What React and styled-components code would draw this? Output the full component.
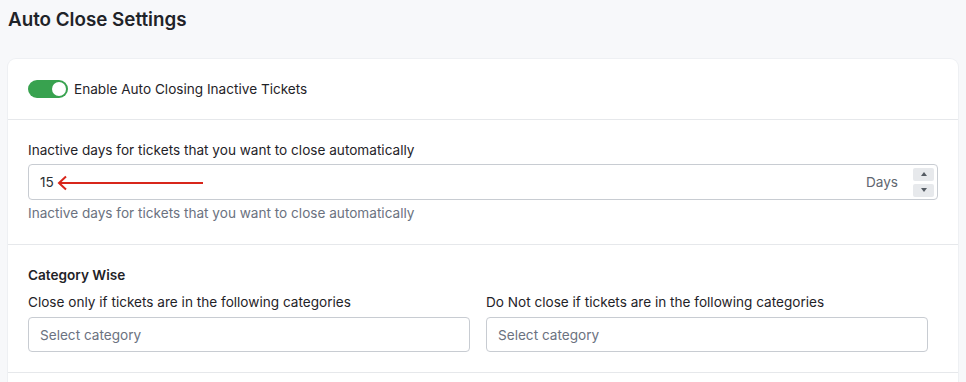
import React from "react";
import styled, { createGlobalStyle } from "styled-components";

const GlobalStyle = createGlobalStyle`
  body {
    margin: 0;
    background-color: #f7f8fa;
    font-family: "Inter", "Noto Sans", sans-serif;
    color: #1f2328;
  }
`;

const Page = styled.div`
  padding: 8px;
  height: 366px;
  overflow: hidden;
`;

const Title = styled.h1`
  margin: 0 0 27px 0;
  font-size: 18.8px;
  line-height: 24px;
  font-weight: 600;
  color: #1f2328;
`;

const Card = styled.div`
  background-color: #ffffff;
  border-radius: 8px;
  box-shadow: 0 0 0 1px #eef0f3;
`;

const Section = styled.div`
  padding: ${(p) => p.pad || "20px"};
  border-bottom: 1px solid #e6e8eb;
`;

const CardTail = styled.div`
  height: 40px;
`;

const ToggleRow = styled.label`
  display: flex;
  align-items: center;
  gap: 6px;
  height: 20px;
  font-size: 13.6px;
`;

const Switch = styled.span`
  position: relative;
  width: 40px;
  height: 18px;
  border-radius: 9px;
  background-color: #38a24f;
  flex-shrink: 0;

  &::after {
    content: "";
    position: absolute;
    top: 2px;
    right: 2px;
    width: 14px;
    height: 14px;
    border-radius: 50%;
    background-color: #ffffff;
  }
`;

const Label = styled.div`
  font-size: 13.6px;
  line-height: ${(p) => p.lh || "20px"};
  margin-bottom: ${(p) => p.mb || "4px"};
`;

const Heading = styled.div`
  font-size: 13.6px;
  font-weight: 600;
  line-height: 20px;
  margin-bottom: 8px;
`;

const InputBox = styled.div`
  position: relative;
  display: flex;
  align-items: center;
  height: ${(p) => p.h || "36px"};
  box-sizing: border-box;
  border: 1px solid #c8ccd2;
  border-radius: 4px;
  padding: 0 3px 0 11px;
  font-size: 13.6px;
  background: #ffffff;
`;

const Value = styled.span`
  color: #2a2e33;
`;

const Placeholder = styled.span`
  color: #6b7280;
`;

const Spacer = styled.span`
  flex: 1;
`;

const Unit = styled.span`
  color: #5f6670;
  margin-right: 15px;
`;

const Spinner = styled.div`
  display: flex;
  flex-direction: column;
  gap: 3px;
`;

const SpinButton = styled.span`
  display: flex;
  align-items: center;
  justify-content: center;
  width: 21px;
  height: 13px;
  border-radius: 2px;
  background-color: #e7e9ec;
`;

const Arrow = styled.svg`
  position: absolute;
  left: 28px;
  top: 10px;
`;

const Helper = styled.div`
  margin-top: 4px;
  font-size: 13.6px;
  line-height: 18px;
  color: #6b7280;
`;

const Columns = styled.div`
  display: grid;
  grid-template-columns: 1fr 1fr;
  gap: 16px;
  padding-right: 10px;
`;

function App() {
  return (
    <>
      <GlobalStyle />
      <Page>
        <Title>Auto Close Settings</Title>
        <Card>
          <Section>
            <ToggleRow>
              <Switch />
              Enable Auto Closing Inactive Tickets
            </ToggleRow>
          </Section>

          <Section pad="20px 20px 22px 20px">
            <Label>Inactive days for tickets that you want to close automatically</Label>
            <InputBox>
              <Value>15</Value>
              <Arrow width="148" height="16" viewBox="0 0 148 16">
                <path d="M2 8 H146" stroke="#d8261b" strokeWidth="2" fill="none" />
                <path d="M9 1.5 L2 8 L9 14.5" stroke="#d8261b" strokeWidth="2" fill="none" />
              </Arrow>
              <Spacer />
              <Unit>Days</Unit>
              <Spinner>
                <SpinButton>
                  <svg width="6" height="4" viewBox="0 0 6 4">
                    <path d="M0 4 L3 0 L6 4 Z" fill="#555b63" />
                  </svg>
                </SpinButton>
                <SpinButton>
                  <svg width="6" height="4" viewBox="0 0 6 4">
                    <path d="M0 0 L3 4 L6 0 Z" fill="#555b63" />
                  </svg>
                </SpinButton>
              </Spinner>
            </InputBox>
            <Helper>Inactive days for tickets that you want to close automatically</Helper>
          </Section>

          <Section>
            <Heading>Category Wise</Heading>
            <Columns>
              <div>
                <Label lh="18px" mb="6px">Close only if tickets are in the following categories</Label>
                <InputBox h="35px">
                  <Placeholder>Select category</Placeholder>
                </InputBox>
              </div>
              <div>
                <Label lh="18px" mb="6px">Do Not close if tickets are in the following categories</Label>
                <InputBox h="35px">
                  <Placeholder>Select category</Placeholder>
                </InputBox>
              </div>
            </Columns>
          </Section>
          <CardTail />
        </Card>
      </Page>
    </>
  );
}

export default App;
